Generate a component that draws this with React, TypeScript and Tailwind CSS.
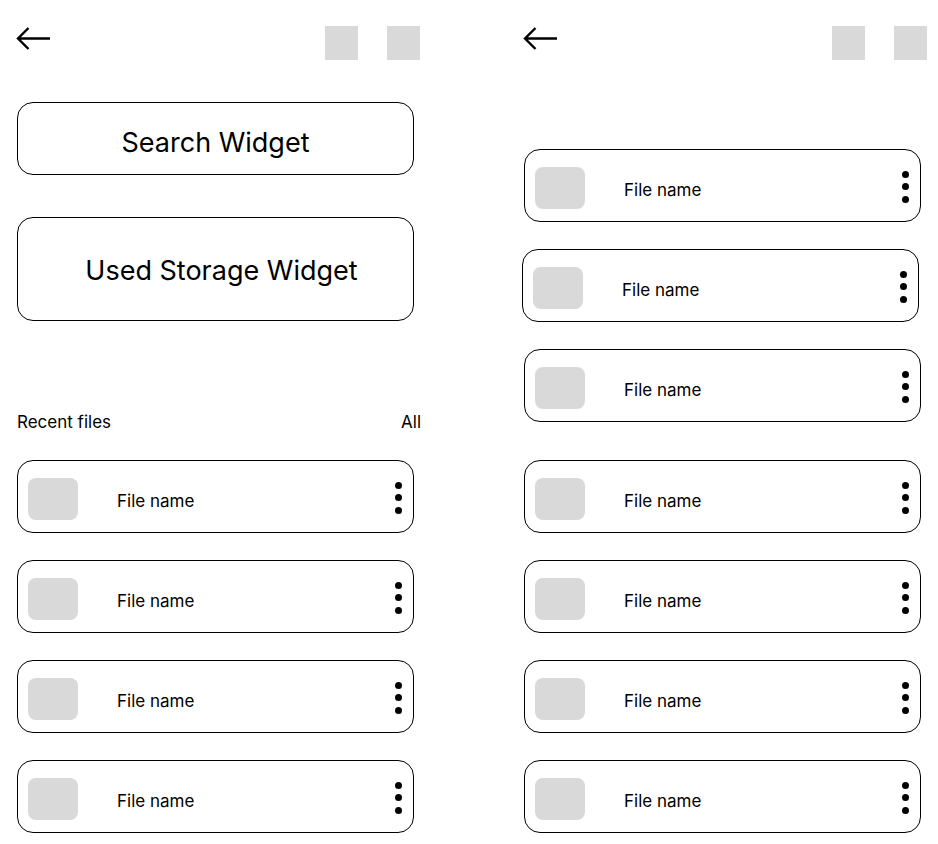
const leftFiles = ["File name", "File name", "File name", "File name"];

function BackArrow() {
  return (
    <svg width="36" height="26" viewBox="0 0 36 26" fill="none" aria-hidden="true">
      <path d="M35 12.5H3M13.5 2L3 12.5L13.5 23" stroke="black" strokeWidth="2.4" />
    </svg>
  );
}

function Header() {
  return (
    <div className="flex h-[34px] items-start justify-between">
      <BackArrow />
      <div className="flex gap-[29px]">
        <div className="h-[34px] w-[33px] bg-[#d9d9d9]" />
        <div className="h-[34px] w-[33px] bg-[#d9d9d9]" />
      </div>
    </div>
  );
}

function FileRow({ name, shift = false }: { name: string; shift?: boolean }) {
  return (
    <div
      className={`flex h-[73px] w-[397px] items-center rounded-[16px] border border-black pt-[5px] pl-[10px] pr-[11px] ${
        shift ? "ml-0" : "ml-[2px]"
      }`}
    >
      <div className="h-[42px] w-[50px] rounded-[8px] bg-[#d9d9d9]" />
      <span className="ml-[39px] mt-[6px] flex-1 text-[17px] text-black">{name}</span>
      <div className="-mt-[3px] flex flex-col gap-[5.5px]">
        <span className="block h-[7px] w-[7px] rounded-full bg-black" />
        <span className="block h-[7px] w-[7px] rounded-full bg-black" />
        <span className="block h-[7px] w-[7px] rounded-full bg-black" />
      </div>
    </div>
  );
}

export default function App() {
  return (
    <div
      className="flex h-[844px] w-[938px] gap-[102px] bg-white pl-[15px] pt-[26px]"
      style={{ fontFamily: "Inter, 'Liberation Sans', sans-serif" }}
    >
      <div className="flex w-[405px] flex-col">
        <Header />
        <div className="ml-[2px] mt-[42px] flex h-[73px] w-[397px] items-center justify-center rounded-[16px] border border-black pt-[10px] text-[27px] text-black">
          Search Widget
        </div>
        <div className="ml-[2px] mt-[42px] flex h-[104px] w-[397px] items-center justify-center rounded-[16px] border border-black pl-[12px] pt-[4px] text-[27px] text-black">
          Used Storage Widget
        </div>
        <div className="-mr-[1px] ml-[2px] mt-[90px] flex h-[24px] items-center justify-between text-[17px] text-black">
          <span>Recent files</span>
          <span>All</span>
        </div>
        <div className="mt-[25px] flex flex-col gap-[27px]">
          {leftFiles.map((f, i) => (
            <FileRow key={i} name={f} />
          ))}
        </div>
      </div>
      <div className="flex w-[405px] flex-col">
        <Header />
        <div className="mt-[89px] flex flex-col gap-[27px]">
          <FileRow name="File name" />
          <FileRow name="File name" shift />
          <FileRow name="File name" />
        </div>
        <div className="mt-[38px] flex flex-col gap-[27px]">
          <FileRow name="File name" />
          <FileRow name="File name" />
          <FileRow name="File name" />
          <FileRow name="File name" />
        </div>
      </div>
    </div>
  );
}
